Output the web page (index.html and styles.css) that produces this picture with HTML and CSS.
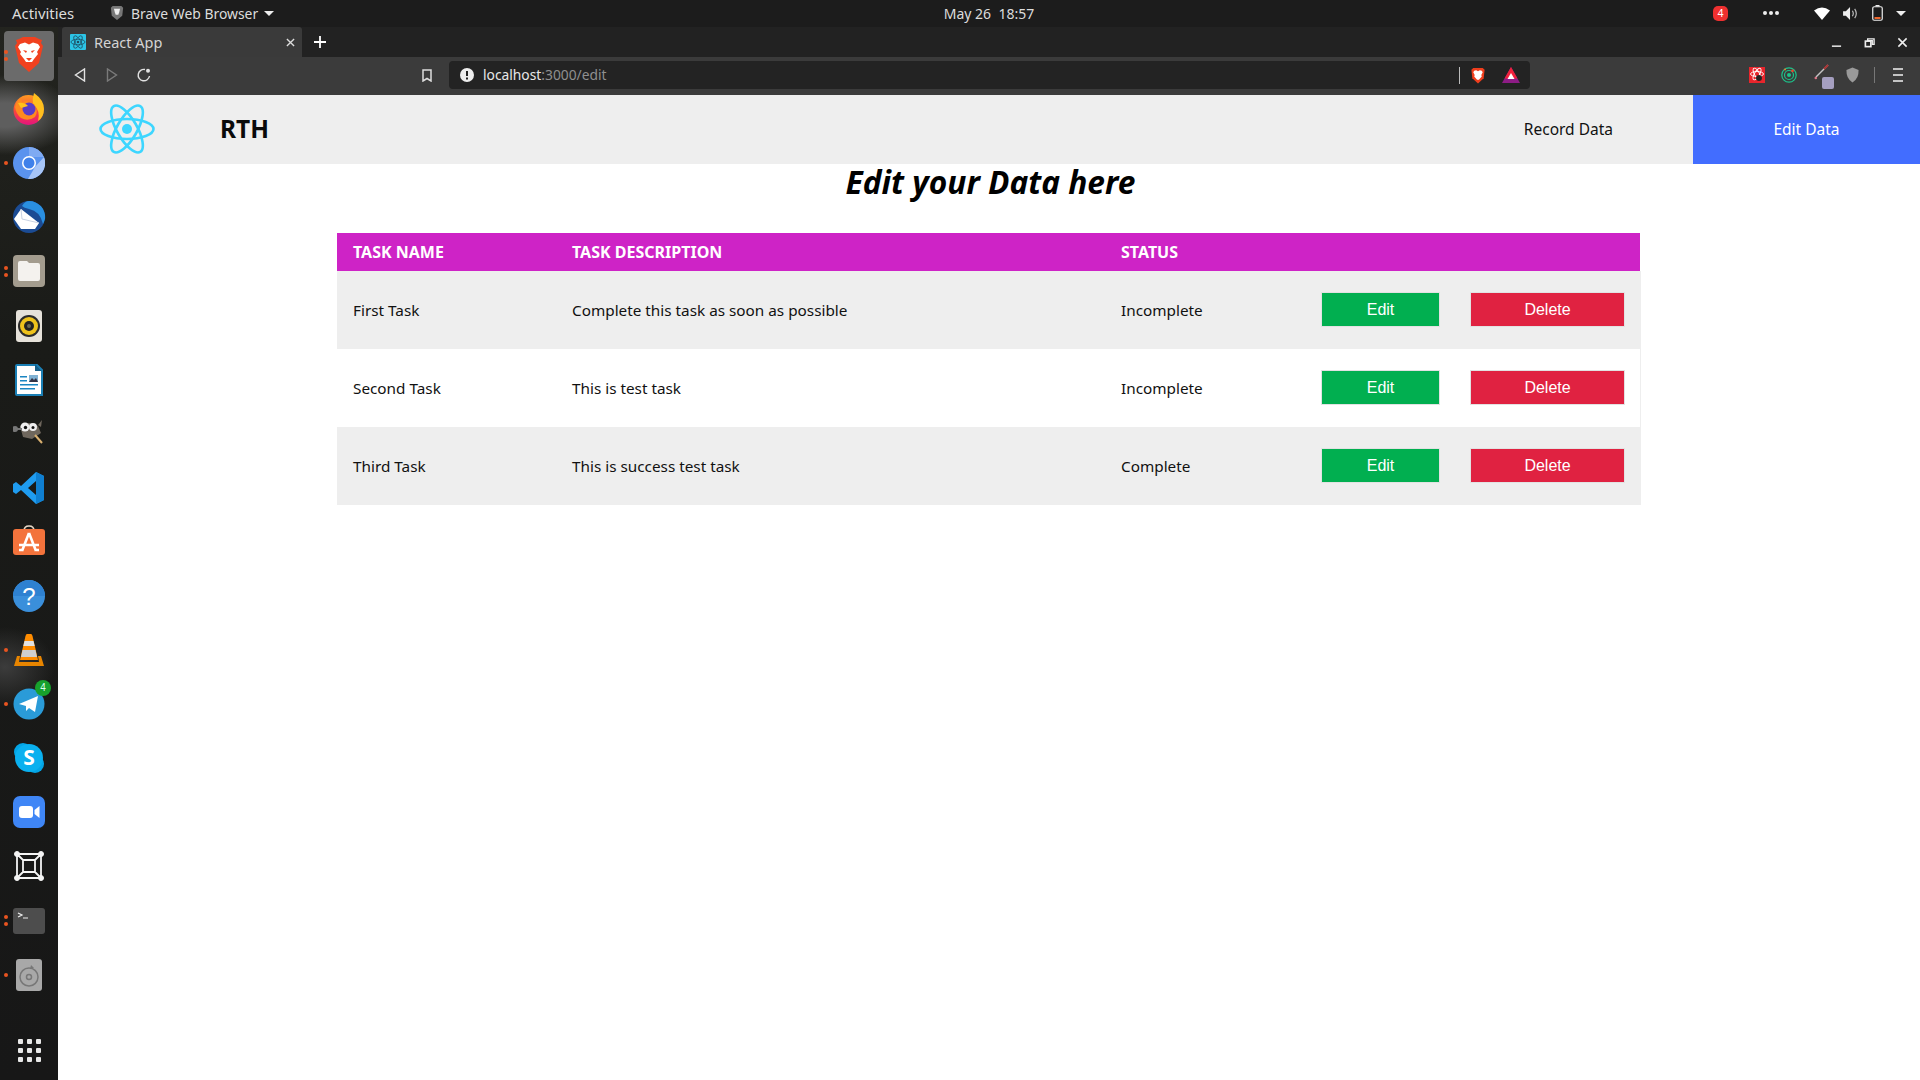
FILE: index.html
```html
<!DOCTYPE html>
<html lang="en">
<head>
<meta charset="utf-8">
<title>React App</title>
<link rel="stylesheet" href="styles.css">
</head>
<body>
<header class="topbar">
  <span class="activities">Activities</span>
  <svg class="app-shield" viewBox="0 0 16 18"><path d="M3 1h10l2 2-1 9-6 5-6-5-1-9z" fill="#777"/><path d="M4.500 4h7l-1 4-1 3h-3l-1-3z" fill="#eee"/></svg>
  <span class="appname">Brave Web Browser</span>
  <i class="caret"></i>
  <span class="clock">May 26&nbsp;&nbsp;18:57</span>
  <span class="badge">4</span>
  <span class="tray-dots"><i></i><i></i><i></i></span>
  <svg class="tray-wifi" viewBox="0 0 16 13"><path d="M0 3.500Q8-2.500 16 3.500L8 13z" fill="#fff"/></svg>
  <svg class="tray-vol" viewBox="0 0 16 14"><path d="M0 4.500h3L7.500 0v14L3 9.500H0z" fill="#eee"/><path d="M10 4q2 3 0 6M12.500 2q3.500 5 0 10" fill="none" stroke="#bbb" stroke-width="1.300"/></svg>
  <svg class="tray-bat" viewBox="0 0 11 16"><rect x=".75" y="1.750" width="9.500" height="13.500" rx="1.500" fill="none" stroke="#eee" stroke-width="1.200"/><rect x="3.500" y="0" width="4" height="1.500" fill="#eee"/><rect x="2.500" y="12" width="6" height="2" fill="#f0662c"/></svg>
  <i class="caret tray-caret"></i>
</header>
<div class="desktop">
  <nav class="dock">
    <div class="dock-item active"><span class="pips two"><i></i><i></i></span>
      <svg class="ic ic-tall" viewBox="0 0 32 36"><path d="M6 2 10 0h12l4 2 3 1-1 3 2 3-4 17-10 9-10-9L2 9l2-3-1-3z" fill="#f1411f"/><path d="M7 7l5-1.500 4 2 4-2 5 1.500 2 3-3 5 1 2-4 5-2 3h-6l-2-3-4-5 1-2-3-5z" fill="#fff"/><path d="M10 13l4 1-1 2zM22 13l-4 1 1 2zM13 21h6l-3 3z" fill="#f1411f"/></svg></div>
    <div class="dock-item">
      <svg class="ic" viewBox="0 0 32 32"><defs><linearGradient id="ffa" x1="0" y1="0" x2="0" y2="1"><stop offset="0" stop-color="#ff9a22"/><stop offset=".55" stop-color="#f9443e"/><stop offset="1" stop-color="#e3137e"/></linearGradient></defs><circle cx="15.500" cy="17" r="15" fill="url(#ffa)"/><path d="M21 0q10 7 10 16 0 8-6 12 3-10-5-17-1-5 1-11z" fill="#ffbf1e"/><path d="M2 14Q4 7 8 5l1 4q6-3 12 2 5 7 1 13-7 5-14 1-5-4-6-11z" fill="#ff8a1f"/><circle cx="16" cy="16" r="6.500" fill="#5b3cc4"/><path d="M5 10q6-1 10 3l-7 2z" fill="#ffc21a"/></svg></div>
    <div class="dock-item dot-one"><span class="pips"><i></i></span>
      <svg class="ic" viewBox="0 0 32 32"><circle cx="16" cy="16" r="16" fill="#5a93ee"/><path d="M16 0a16 16 0 0 1 15 10H16z" fill="#7faaf2"/><path d="M31 10a16 16 0 0 1-16 22l7-12z" fill="#a7c5f7"/><circle cx="16" cy="16" r="7" fill="#fff"/><circle cx="16" cy="16" r="5.500" fill="#3f81ea"/></svg></div>
    <div class="dock-item">
      <svg class="ic wide" viewBox="0 0 34 32"><circle cx="17" cy="16" r="16" fill="#1b4b93"/><path d="M17 0a16 16 0 0 1 16 18q-1 3-2 5-3-13-14-15-5-1-7-3 3-5 7-5z" fill="#2a8fe0"/><path d="M2 18L9 8l18 14-4 6H9z" fill="#fff"/><path d="M9 8l1 10 17 4" fill="none" stroke="#c9d3e3" stroke-width="1"/></svg></div>
    <div class="dock-item"><span class="pips two"><i></i><i></i></span>
      <svg class="ic" viewBox="0 0 32 32"><rect width="32" height="32" rx="4" fill="#a39c8e"/><path d="M5 8q0-2 2-2h7l2 2h9q2 0 2 2v14q0 2-2 2H7q-2 0-2-2z" fill="#f4f2ee"/></svg></div>
    <div class="dock-item">
      <svg class="ic" viewBox="0 0 32 32"><rect x="3" y="0" width="26" height="32" rx="3" fill="#e6e2da"/><circle cx="16" cy="16" r="11" fill="#2b2b2b"/><circle cx="16" cy="16" r="9" fill="#eec21c"/><circle cx="16" cy="16" r="5" fill="#222"/><circle cx="16" cy="16" r="2" fill="#665"/></svg></div>
    <div class="dock-item">
      <svg class="ic" viewBox="0 0 32 32"><path d="M4 1h20l5 5v25H4q-1 0-1-1V2q0-1 1-1z" fill="#fff" stroke="#1a7fb5" stroke-width="2"/><path d="M22 0l7 7h-7z" fill="#155f8a"/><path d="M7 12h7v1.500H7zM7 16h7v1.500H7zM7 20h18v1.500H7zM7 24h15v1.500H7z" fill="#1b86c2"/><rect x="16" y="11" width="9" height="7" fill="#7fb2d4"/><path d="M16 18l3-4 2 2 2-2 2 4z" fill="#334"/></svg></div>
    <div class="dock-item">
      <svg class="ic" viewBox="0 0 32 28"><path d="M7 6q9-6 18 0l3 7-9 6-9-2z" fill="#6f675d"/><circle cx="12" cy="7" r="4.500" fill="#eee"/><circle cx="20" cy="7" r="4" fill="#eee"/><circle cx="12.500" cy="7.500" r="1.700" fill="#111"/><circle cx="20" cy="7.500" r="1.500" fill="#111"/><circle cx="2" cy="9" r="3" fill="#777"/><path d="M2 9h7" stroke="#777" stroke-width="2"/><path d="M22 15l7 8" stroke="#d9b070" stroke-width="2"/><path d="M29 0l-1 7-3-2z" fill="#6f675d"/></svg></div>
    <div class="dock-item">
      <svg class="ic" viewBox="0 0 32 32"><path d="M23 0l8 4v24l-8 4L8 18l-5 4-3-2v-8l3-2 5 4zM23 9l-8 7 8 7z" fill="#1f9cf0" fill-rule="evenodd"/><path d="M23 0l8 4v24l-8 4z" fill="#0f7fd0"/></svg></div>
    <div class="dock-item">
      <svg class="ic ic-store" viewBox="0 0 32 30"><path d="M11 6q0-5 5-5t5 5" fill="none" stroke="#e8d9c8" stroke-width="1.500"/><rect y="4" width="32" height="26" rx="3" fill="#f3733c"/><path d="M16 8l-7 18M16 8l7 18M6 20h20M9 25H6M26 25h-3" stroke="#fff" stroke-width="2.600" fill="none"/></svg></div>
    <div class="dock-item">
      <svg class="ic" viewBox="0 0 32 32"><circle cx="16" cy="16" r="16" fill="#3a8fdb"/><path d="M0 16a16 16 0 0 1 32 0z" fill="#2e81d1"/><text x="16" y="25" class="q-mark">?</text></svg></div>
    <div class="dock-item dot-one"><span class="pips"><i></i></span>
      <svg class="ic" viewBox="0 0 32 32"><path d="M14 0h4q1 0 1.500 2L25 26H7l5.500-24q.5-2 1.500-2z" fill="#ff8c00"/><path d="M11.500 7h9l1.200 5h-11.400z" fill="#e2e2e2"/><path d="M9.500 16h13l1.500 7H8z" fill="#cfcfcf"/><path d="M4 22h3l-1 6h20l-1-6h3l3 10H1z" fill="#e88500"/></svg></div>
    <div class="dock-item dot-one"><span class="pips"><i></i></span>
      <svg class="ic" viewBox="0 0 32 32"><circle cx="16" cy="16" r="15.500" fill="#2a9bd8"/><path d="M6 16l19-8-3 16-6-4-3 3v-5z" fill="#fff"/></svg>
      <span class="tg-badge">4</span></div>
    <div class="dock-item">
      <svg class="ic" viewBox="0 0 32 32"><circle cx="10" cy="10" r="9" fill="#03a5e6"/><circle cx="22" cy="22" r="9" fill="#03a5e6"/><circle cx="16" cy="16" r="14" fill="#0ab0ef"/><text x="16" y="23" class="s-mark">S</text></svg></div>
    <div class="dock-item">
      <svg class="ic" viewBox="0 0 32 32"><rect width="32" height="32" rx="7" fill="#3f86f6"/><rect x="6" y="10" width="14" height="12" rx="3" fill="#fff"/><path d="M21.500 14l5-4v12l-5-4z" fill="#fff"/></svg></div>
    <div class="dock-item">
      <svg class="ic" viewBox="0 0 32 32" fill="#f4f4f4" stroke="#f4f4f4"><path d="M4 4h24v24H4zM10 10h12v12H10zM4 4l6 6M28 4l-6 6M4 28l6-6M28 28l-6-6" fill="none" stroke-width="1.800"/><circle cx="4" cy="4" r="2.500"/><circle cx="28" cy="4" r="2.500"/><circle cx="4" cy="28" r="2.500"/><circle cx="28" cy="28" r="2.500"/></svg></div>
    <div class="dock-item"><span class="pips two"><i></i><i></i></span>
      <svg class="ic" viewBox="0 0 32 26"><rect width="32" height="26" rx="3" fill="#4d4d4d"/><path d="M5 5l4 2-4 2M10 10h5" fill="none" stroke="#eee" stroke-width="1.200"/></svg></div>
    <div class="dock-item dot-one"><span class="pips"><i></i></span>
      <svg class="ic" viewBox="0 0 32 32"><rect x="3" y="0" width="26" height="32" rx="3" fill="#a8a8a8"/><circle cx="16" cy="18" r="9" fill="none" stroke="#777" stroke-width="1.500"/><circle cx="16" cy="18" r="2.500" fill="none" stroke="#777" stroke-width="1.500"/><path d="M18 6l3 3-4 1" fill="#777"/></svg></div>
    <div class="dock-grid">
      <i></i><i></i><i></i><i></i><i></i><i></i><i></i><i></i><i></i>
    </div>
  </nav>
  <div class="window">
    <div class="tabstrip">
      <div class="tab">
        <svg class="favicon" viewBox="0 0 16 16"><rect width="16" height="16" rx="1" fill="#2cc4e6"/><g fill="none" stroke="#1d4f63" stroke-width=".8"><ellipse cx="8" cy="8" rx="7" ry="2.800"/><ellipse cx="8" cy="8" rx="7" ry="2.800" transform="rotate(60 8 8)"/><ellipse cx="8" cy="8" rx="7" ry="2.800" transform="rotate(120 8 8)"/></g><circle cx="8" cy="8" r="1.300" fill="#1d4f63"/></svg>
        <span class="tab-title">React App</span>
        <svg class="tab-x" viewBox="0 0 10 10"><path d="M1 1l8 8M9 1L1 9" stroke="#ddd" stroke-width="1.500"/></svg>
      </div>
      <svg class="new-tab" viewBox="0 0 12 12"><path d="M6 0v12M0 6h12" stroke="#fff" stroke-width="1.800"/></svg>
      <div class="win-controls">
        <svg viewBox="0 0 12 12"><path d="M1 10h10" stroke="#eee" stroke-width="1.600"/></svg>
        <svg viewBox="0 0 12 12"><path d="M4 2h7v6H9V4H4z" fill="none" stroke="#eee" stroke-width="1.500"/><rect x="1.500" y="4.500" width="6" height="6" fill="none" stroke="#eee" stroke-width="1.800"/></svg>
        <svg viewBox="0 0 12 12"><path d="M1.500 1.500l9 9M10.500 1.500l-9 9" stroke="#eee" stroke-width="1.700"/></svg>
      </div>
    </div>
    <div class="toolbar">
      <svg class="tb-back" viewBox="0 0 12 14"><path d="M10.500 1v12L1.500 7z" fill="none" stroke="#e2e2e2" stroke-width="1.400"/></svg>
      <svg class="tb-fwd" viewBox="0 0 12 14"><path d="M1.500 1v12l9-6z" fill="none" stroke="#7a7a7a" stroke-width="1.400"/></svg>
      <svg class="tb-reload" viewBox="0 0 14 14"><path d="M12.500 8A5.700 5.700 0 1 1 8 1.500" fill="none" stroke="#e2e2e2" stroke-width="1.400"/><circle cx="11" cy="2.800" r="2" fill="#e2e2e2"/></svg>
      <svg class="tb-bookmark" viewBox="0 0 10 13"><path d="M1 1h8v11L5 9.500 1 12z" fill="none" stroke="#ddd" stroke-width="1.500"/></svg>
      <div class="omnibox">
        <svg class="omni-info" viewBox="0 0 14 14"><circle cx="7" cy="7" r="7" fill="#eee"/><path d="M6 3h2v5H6zM6 9.500h2v2H6z" fill="#222"/></svg>
        <span class="url">localhost<span class="url-dim">:3000/edit</span></span>
        <i class="omni-sep"></i>
        <svg class="omni-brave" viewBox="0 0 16 18"><path d="M3 1h10l2 2-1 9-6 5.500L2 12 1 3z" fill="#ef3e1d"/><path d="M4 4l2-.5 2 1 2-1 2 .5 1 1.500-1.500 3 .5 1.500-3 3.500H7l-3-3.500.5-1.500L3 5.500z" fill="#fff"/></svg>
        <svg class="omni-bat" viewBox="0 0 18 16"><path d="M9 0l9 16H0z" fill="#8e1c86"/><path d="M9 0l6.500 11.500h-13z" fill="#f0213b"/><path d="M9 6l3.500 6h-7z" fill="#fff"/></svg>
      </div>
      <svg class="ext ext-one" viewBox="0 0 16 16"><rect width="16" height="16" fill="#e8252c"/><g fill="none" stroke="#fff" stroke-width=".9"><ellipse cx="8" cy="7" rx="6.500" ry="2.500"/><ellipse cx="8" cy="7" rx="6.500" ry="2.500" transform="rotate(60 8 7)"/><ellipse cx="8" cy="7" rx="6.500" ry="2.500" transform="rotate(120 8 7)"/></g><circle cx="10" cy="11" r="3" fill="#222"/></svg>
      <svg class="ext ext-two" viewBox="0 0 16 16"><circle cx="8" cy="8" r="7.200" fill="none" stroke="#1dc28a" stroke-width="1.200"/><circle cx="8" cy="8" r="4.500" fill="none" stroke="#1dc28a" stroke-width="1.200"/><circle cx="8" cy="8" r="2" fill="#1dc28a"/><circle cx="11.500" cy="3.800" r="1.400" fill="#e8452c"/><circle cx="4" cy="2.500" r="1" fill="#ef7a2c"/></svg>
      <span class="ext-three">
        <svg class="ext-pen" viewBox="0 0 16 16"><path d="M14 1L2 13" stroke="#c4c4c4" stroke-width="1.500"/><path d="M14 1l-4 4" stroke="#a33" stroke-width="2"/><circle cx="1.800" cy="14" r="1.300" fill="#d78"/></svg>
        <i class="ext-square"></i>
      </span>
      <svg class="ext ext-shield" viewBox="0 0 14 16"><path d="M7 0l6.500 2.500q.5 9-6.500 13.500Q0 11.500.5 2.500z" fill="#9a9a9a"/></svg>
      <i class="tb-sep"></i>
      <span class="tb-menu"><i></i><i></i><i></i></span>
    </div>
    <main class="page">
      <div class="navbar">
        <svg class="logo" viewBox="0 0 56 50"><g fill="none" stroke="#3dd6ff" stroke-width="2.600"><ellipse cx="28" cy="25" rx="26.500" ry="10"/><ellipse cx="28" cy="25" rx="26.500" ry="10" transform="rotate(60 28 25)"/><ellipse cx="28" cy="25" rx="26.500" ry="10" transform="rotate(120 28 25)"/></g><circle cx="28" cy="25" r="5" fill="#3dd6ff"/></svg>
        <span class="brand">RTH</span>
        <a class="nav-link nav-plain">Record Data</a>
        <a class="nav-link nav-active">Edit Data</a>
      </div>
      <h1 class="heading">Edit your Data here</h1>
      <table class="tasks">
        <colgroup><col class="c-name"><col class="c-desc"><col class="c-status"><col class="c-edit"><col class="c-del"></colgroup>
        <thead><tr><th>TASK NAME</th><th>TASK DESCRIPTION</th><th>STATUS</th><th></th><th></th></tr></thead>
        <tbody>
          <tr><td>First Task</td><td>Complete this task as soon as possible</td><td>Incomplete</td><td><button class="btn btn-edit">Edit</button></td><td><button class="btn btn-del">Delete</button></td></tr>
          <tr><td>Second Task</td><td>This is test task</td><td>Incomplete</td><td><button class="btn btn-edit">Edit</button></td><td><button class="btn btn-del">Delete</button></td></tr>
          <tr><td>Third Task</td><td>This is success test task</td><td>Complete</td><td><button class="btn btn-edit">Edit</button></td><td><button class="btn btn-del">Delete</button></td></tr>
        </tbody>
      </table>
    </main>
  </div>
</div>
</body>
</html>
```
FILE: styles.css
```css
* { box-sizing: border-box; }
html, body { margin: 0; height: 100%; overflow: hidden; }
body {
  display: flex;
  flex-direction: column;
  width: 1920px;
  height: 1080px;
  font-family: "Noto Sans", "Open Sans", sans-serif;
  background: #fff;
  color: #111;
}
svg { display: block; flex: none; }
i { display: block; }

/* top bar */
.topbar {
  display: flex;
  align-items: center;
  height: 27px;
  flex: none;
  background: #1c1c1c;
  color: #dcdcdc;
  font-size: 13.9px;
  padding: 0 0 1px 12px;
}
.activities { width: 98px; font-size: 14.9px; }
.app-shield { width: 14px; height: 16px; margin-right: 7px; }
.appname { width: 133px; white-space: nowrap; }
.caret {
  width: 0; height: 0;
  border-left: 5px solid transparent;
  border-right: 5px solid transparent;
  border-top: 5px solid #eee;
}
.clock { width: 100px; margin-left: 665px; text-align: center; font-size: 14px; white-space: nowrap; }
.badge {
  width: 15px; height: 15px;
  margin-left: 674px;
  border-radius: 5px;
  background: #ee3030;
  color: #fff;
  font: 11px/15px "Liberation Sans", sans-serif;
  text-align: center;
}
.tray-dots { display: flex; gap: 2px; margin-left: 35px; }
.tray-dots i { width: 4px; height: 4px; border-radius: 50%; background: #eee; }
.tray-wifi { width: 16px; height: 13px; margin-left: 35px; }
.tray-vol { width: 15px; height: 13px; margin-left: 13px; }
.tray-bat { width: 11px; height: 16px; margin-left: 14px; }
.tray-caret { margin-left: 13px; }

/* dock */
.desktop { display: flex; flex: 1; min-height: 0; }
.dock {
  width: 58px;
  flex: none;
  display: flex;
  flex-direction: column;
  background:
    radial-gradient(ellipse 70px 40px at 5px 88px, #5e5e5e 0, #5e5e5e 30%, rgba(70,70,70,0) 100%),
    radial-gradient(ellipse 50px 40px at 5px 640px, #3c3c3c 0, rgba(40,40,40,0) 100%),
    linear-gradient(#23241f 0, #1a1b18 30%, #171717 100%);
  padding-top: 1px;
}
.dock-item {
  position: relative;
  height: 54.1px;
  flex: none;
  display: flex;
  align-items: center;
  justify-content: center;
}
.dock-item.active::before {
  content: "";
  position: absolute;
  left: 4px; top: 3px;
  width: 50px; height: 50px;
  border-radius: 4px;
  background: #6b6b6b;
}
.ic { position: relative; width: 32px; height: 32px; }
.ic.wide { width: 34px; }
.ic.ic-tall { height: 36px; }
.ic.ic-store { height: 30px; margin-bottom: 4px; }
.pips {
  position: absolute;
  left: 4px; top: 0; bottom: 0;
  display: flex;
  flex-direction: column;
  justify-content: center;
  gap: 3px;
  z-index: 1;
}
.pips i { width: 4px; height: 4px; border-radius: 50%; background: #e95420; }
.tg-badge {
  position: absolute;
  left: 35px; top: 3px;
  width: 16px; height: 16px;
  border-radius: 50%;
  background: #17a12c;
  color: #dfe;
  font: 10px/16px "Liberation Sans", sans-serif;
  text-align: center;
}
.q-mark { font: 24px "Liberation Sans", sans-serif; fill: #fff; text-anchor: middle; }
.s-mark { font: bold 21px "Noto Sans", sans-serif; fill: #fff; text-anchor: middle; }
.dock-grid {
  display: grid;
  grid-template-columns: repeat(3, 5px);
  gap: 4px;
  justify-content: center;
  margin-top: 37px;
}
.dock-grid i { width: 5px; height: 5px; border-radius: 1px; background: #e8e8e8; }

/* browser chrome */
.window { flex: 1; min-width: 0; display: flex; flex-direction: column; }
.tabstrip { height: 30px; flex: none; display: flex; align-items: center; background: #222; padding-left: 4px; }
.tab {
  width: 240px;
  height: 30px;
  align-self: flex-end;
  display: flex;
  align-items: center;
  background: #3a3a3a;
  border-radius: 3px 3px 0 0;
  padding-left: 8px;
}
.favicon { width: 16px; height: 16px; margin-right: 8px; }
.tab-title { flex: 1; color: #d4d4d4; font-size: 14.5px; margin-bottom: 1px; }
.tab-x { width: 9px; height: 9px; margin-right: 7px; }
.new-tab { width: 12px; height: 12px; margin-left: 12px; }
.win-controls { display: flex; gap: 22px; margin-left: auto; padding-right: 12px; }
.win-controls svg { width: 11px; height: 11px; }
.toolbar { height: 38px; flex: none; display: flex; align-items: center; background: #3b3b3b; padding: 0 0 2px 16px; }
.tb-back, .tb-fwd { width: 12px; height: 14px; }
.tb-fwd { margin-left: 20px; }
.tb-reload { width: 14px; height: 14px; margin-left: 19px; }
.tb-bookmark { width: 10px; height: 13px; margin-left: 271px; }
.omnibox {
  width: 1081px;
  height: 28px;
  margin-left: 17px;
  display: flex;
  align-items: center;
  background: #232323;
  border-radius: 4px;
  padding-left: 11px;
}
.omni-info { width: 14px; height: 14px; margin-right: 9px; }
.url { width: 976px; color: #e8e8e8; font-size: 13.8px; white-space: nowrap; margin-bottom: 1px; }
.url-dim { color: #8f8f8f; }
.omni-sep { width: 1px; height: 17px; background: #bbb; }
.omni-brave { width: 16px; height: 17px; margin-left: 10px; }
.omni-bat { width: 18px; height: 16px; margin-left: 16px; }
.ext { height: 16px; }
.ext-one { width: 16px; margin-left: 219px; }
.ext-two { width: 16px; margin-left: 16px; }
.ext-three { position: relative; width: 20px; height: 22px; margin-left: 17px; }
.ext-pen { position: absolute; left: 0; top: 0; width: 16px; height: 16px; }
.ext-square { position: absolute; right: 0; bottom: -3px; width: 12px; height: 12px; border-radius: 2px; background: #a59fc0; }
.ext-shield { width: 13px; margin-left: 12px; }
.tb-sep { width: 1px; height: 16px; background: #777; margin-left: 15px; }
.tb-menu { display: flex; flex-direction: column; gap: 4px; margin-left: 18px; }
.tb-menu i { width: 10px; height: 2px; background: #c4c4c4; }

/* page */
.page { flex: 1; min-height: 0; background: #fff; }
.navbar { height: 69px; display: flex; align-items: center; background: #eee; padding-left: 41px; }
.logo { width: 56px; height: 50px; margin-bottom: 1px; }
.brand { margin: 0 0 2px 65px; font-size: 24.5px; font-weight: 700; color: #0a0a0a; }
.nav-link { font-size: 15.5px; color: #111; }
.nav-plain { margin: 0 80px 2px auto; }
.nav-active {
  width: 227px;
  height: 69px;
  line-height: 69px;
  text-align: center;
  background: #426dff;
  color: #fff;
}
.heading {
  margin: 0 0 32px;
  padding-left: 3px;
  height: 37px;
  line-height: 35px;
  text-align: center;
  font-size: 31.700px;
  font-weight: 700;
  font-style: italic;
  color: #000;
}
.tasks { width: 1303px; margin: 0 0 0 279px; border-collapse: collapse; table-layout: fixed; font-size: 15.3px; }
.c-name { width: 219px; }
.c-desc { width: 549px; }
.c-status { width: 200px; }
.c-edit { width: 150px; }
.c-del { width: 185px; }
.tasks th {
  height: 38px;
  padding: 0 0 0 16px;
  background: #ce23c6;
  color: #fff;
  font-weight: 700;
  text-align: left;
  font-size: 16px;
}
.tasks td { height: 78px; padding: 0 15px 1px 16px; color: #111; white-space: nowrap; }
.tasks tbody tr:nth-child(odd) td { background: #eee; }
.tasks td:last-child { box-shadow: 1px 0 0 #eee; padding-left: 15px; }
.btn {
  display: block;
  height: 35px;
  border: 1px solid #e2e2e2;
  padding: 0;
  color: #fff;
  font: 16px "Liberation Sans", sans-serif;
}
.btn-edit { width: 119px; background: #01af50; }
.btn-del { width: 155px; background: #e02241; }
```
